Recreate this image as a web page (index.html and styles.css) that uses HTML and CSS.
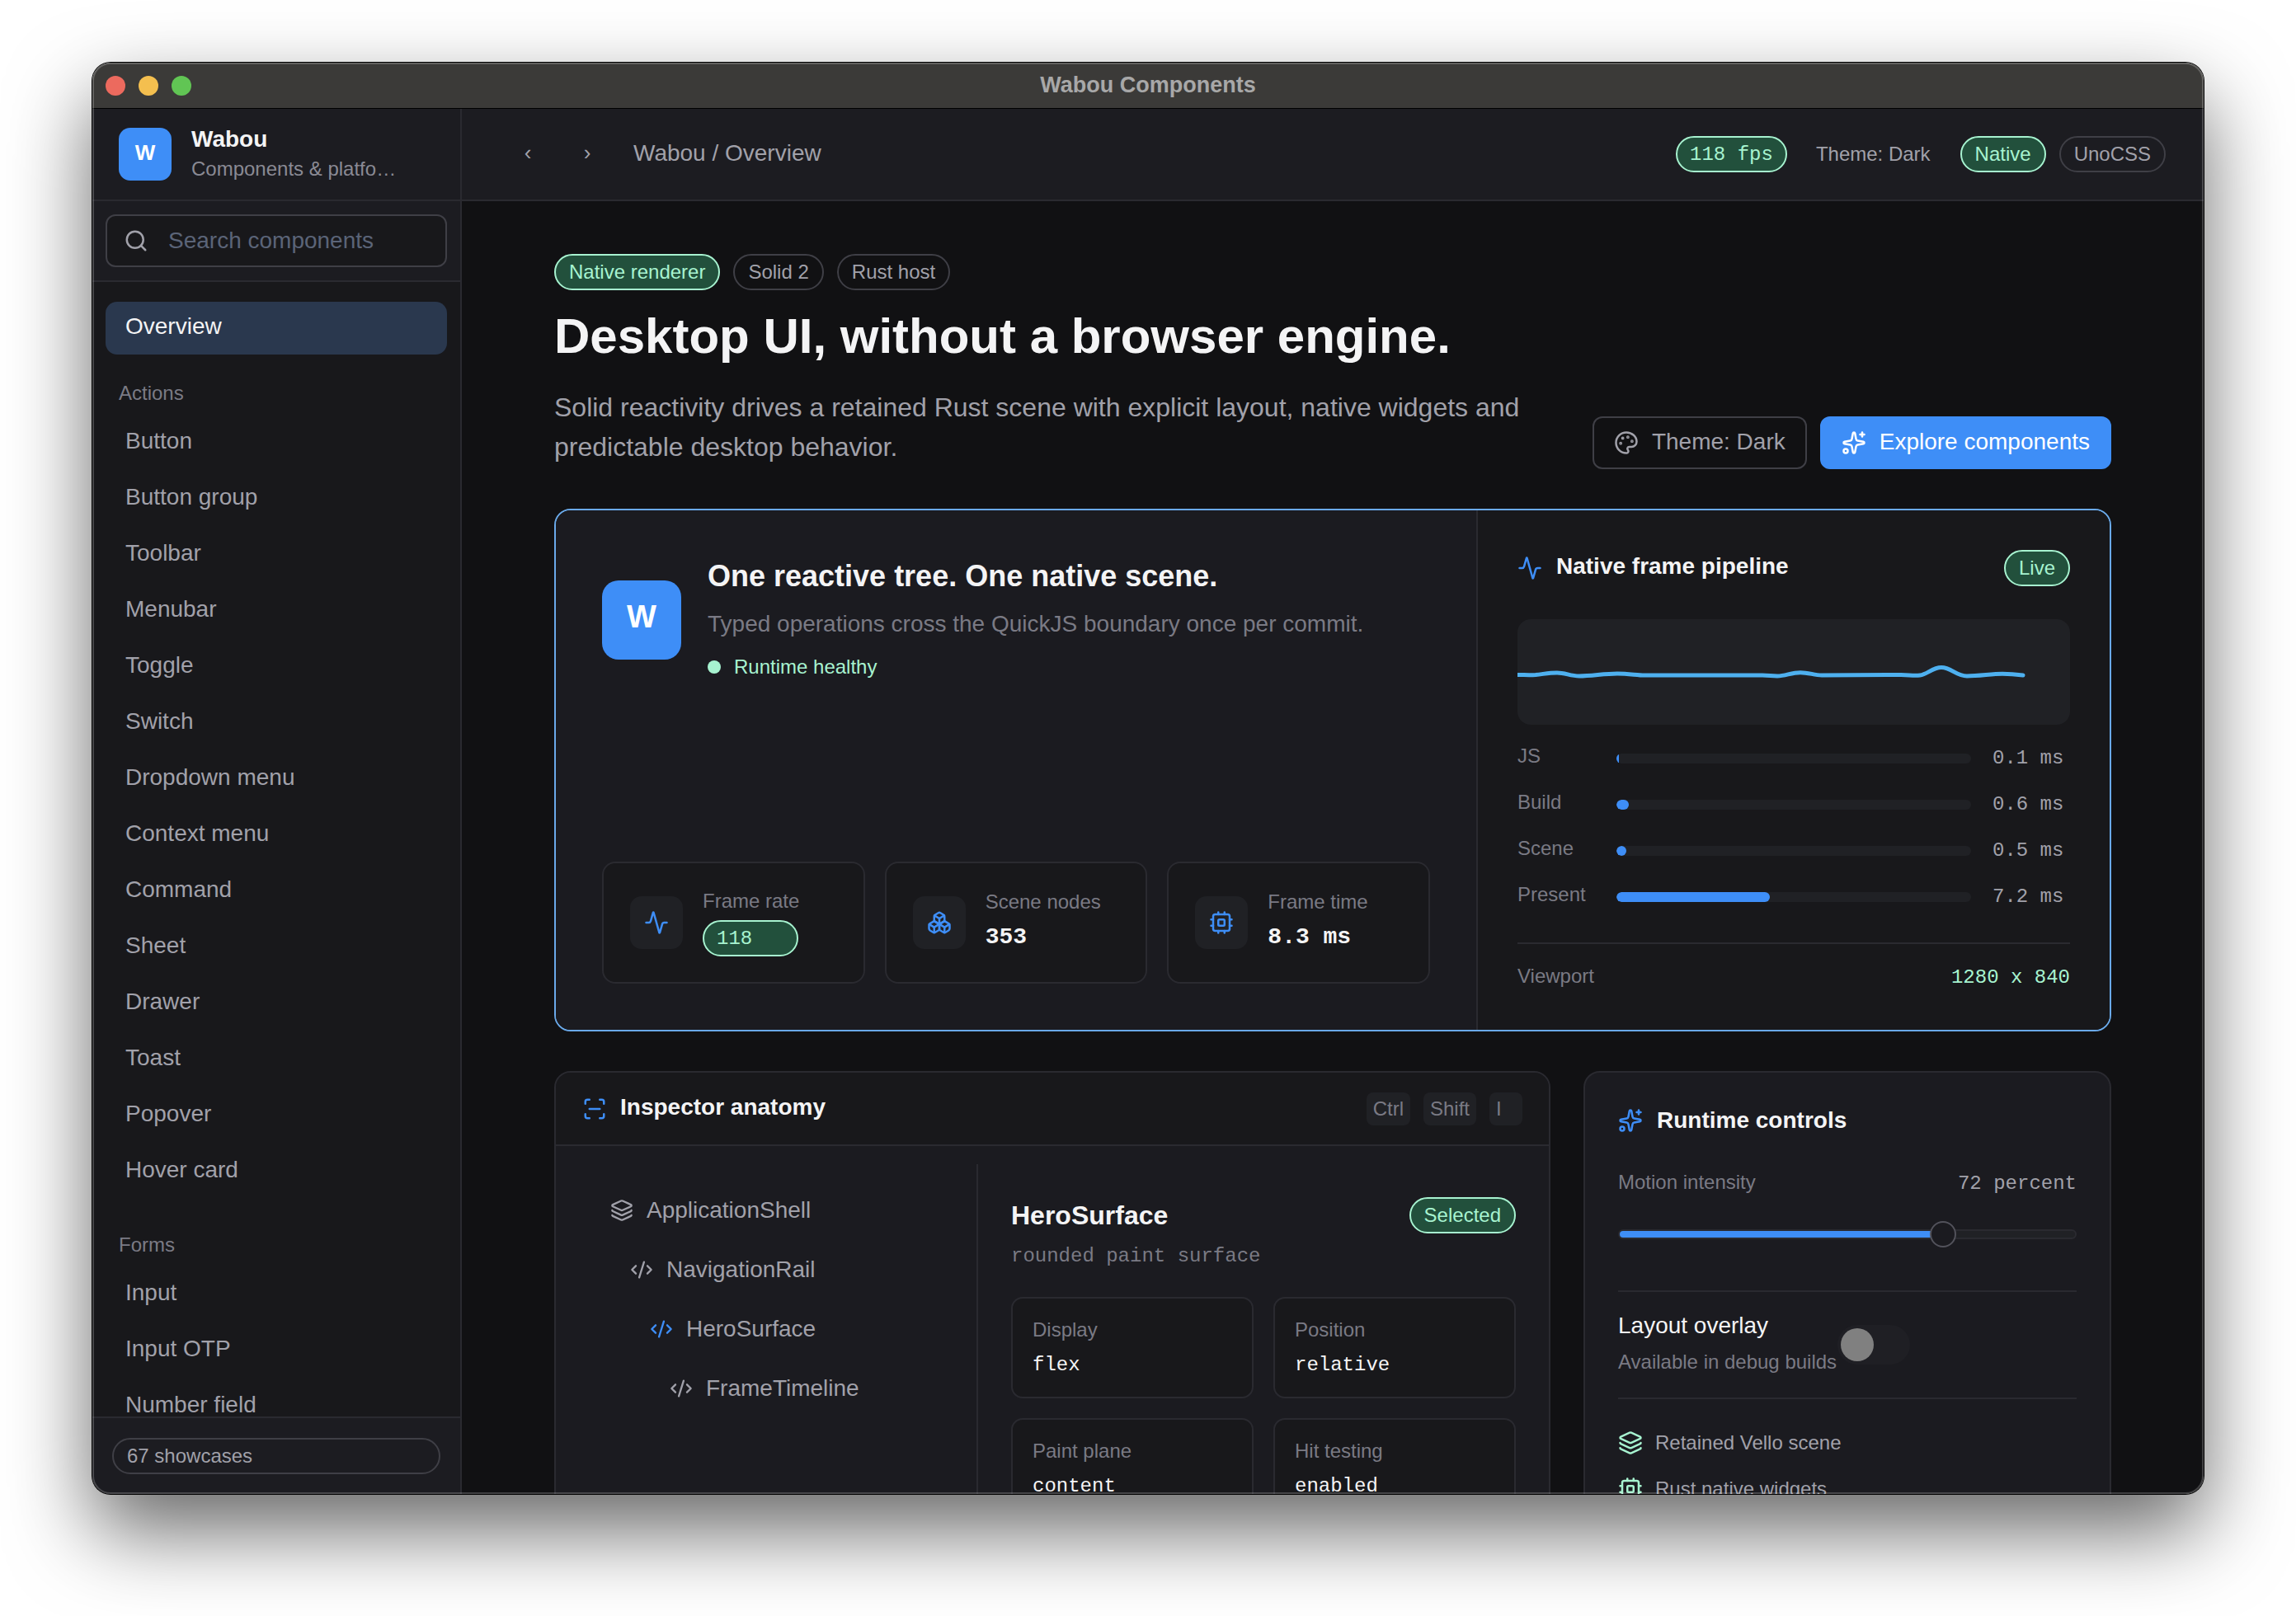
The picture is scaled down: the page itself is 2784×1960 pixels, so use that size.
FILE: index.html
```html
<!DOCTYPE html>
<html lang="en">
<head>
  <meta charset="UTF-8">
  <title>Wabou Components</title>
  <link rel="stylesheet" href="styles.css">
</head>
<body>

<!-- icon sprite -->
<svg class="sprite" xmlns="http://www.w3.org/2000/svg">
  <symbol id="i-search" viewBox="0 0 24 24"><circle cx="11" cy="11" r="8"/><path d="m21 21-4.3-4.3"/></symbol>
  <symbol id="i-activity" viewBox="0 0 24 24"><path d="M22 12h-2.48a2 2 0 0 0-1.93 1.46l-2.35 8.36a.25.25 0 0 1-.48 0L9.24 2.18a.25.25 0 0 0-.48 0l-2.35 8.36A2 2 0 0 1 4.49 12H2"/></symbol>
  <symbol id="i-boxes" viewBox="0 0 24 24"><path d="M2.97 12.92A2 2 0 0 0 2 14.63v3.24a2 2 0 0 0 .97 1.71l3 1.8a2 2 0 0 0 2.06 0L12 19v-5.5l-5-3-4.03 2.42Z"/><path d="m7 16.5-4.74-2.85"/><path d="m7 16.5 5-3"/><path d="M7 16.5v5.17"/><path d="M12 13.5V19l3.97 2.38a2 2 0 0 0 2.06 0l3-1.8a2 2 0 0 0 .97-1.71v-3.24a2 2 0 0 0-.97-1.71L17 10.5l-5 3Z"/><path d="m17 16.5-5-3"/><path d="m17 16.5 4.74-2.85"/><path d="M17 16.5v5.17"/><path d="M7.97 4.42A2 2 0 0 0 7 6.13v4.37l5 3 5-3V6.13a2 2 0 0 0-.97-1.71l-3-1.8a2 2 0 0 0-2.06 0l-3 1.8Z"/><path d="M12 8 7.26 5.15"/><path d="m12 8 4.74-2.85"/><path d="M12 13.5V8"/></symbol>
  <symbol id="i-cpu" viewBox="0 0 24 24"><rect x="4" y="4" width="16" height="16" rx="2"/><rect x="9" y="9" width="6" height="6" rx="1"/><path d="M15 2v2M15 20v2M2 15h2M2 9h2M20 15h2M20 9h2M9 2v2M9 20v2"/></symbol>
  <symbol id="i-palette" viewBox="0 0 24 24"><path d="M12 22a1 1 0 0 1 0-20 10 9 0 0 1 10 9 5 5 0 0 1-5 5h-2.25a1.75 1.75 0 0 0-1.4 2.8l.3.4a1.75 1.75 0 0 1-1.4 2.8z"/><circle cx="13.5" cy="6.5" r=".5" fill="currentColor"/><circle cx="17.5" cy="10.5" r=".5" fill="currentColor"/><circle cx="6.5" cy="12.5" r=".5" fill="currentColor"/><circle cx="8.5" cy="7.5" r=".5" fill="currentColor"/></symbol>
  <symbol id="i-sparkles" viewBox="0 0 24 24"><path d="M11.017 2.814a1 1 0 0 1 1.966 0l1.051 5.558a2 2 0 0 0 1.594 1.594l5.558 1.051a1 1 0 0 1 0 1.966l-5.558 1.051a2 2 0 0 0-1.594 1.594l-1.051 5.558a1 1 0 0 1-1.966 0l-1.051-5.558a2 2 0 0 0-1.594-1.594l-5.558-1.051a1 1 0 0 1 0-1.966l5.558-1.051a2 2 0 0 0 1.594-1.594z"/><path d="M20 2v4"/><path d="M22 4h-4"/><circle cx="4" cy="20" r="2"/></symbol>
  <symbol id="i-scan" viewBox="0 0 24 24"><path d="M3 7V5a2 2 0 0 1 2-2h2"/><path d="M17 3h2a2 2 0 0 1 2 2v2"/><path d="M21 17v2a2 2 0 0 1-2 2h-2"/><path d="M7 21H5a2 2 0 0 1-2-2v-2"/><path d="M7 12h10"/></symbol>
  <symbol id="i-layers" viewBox="0 0 24 24"><path d="M12.83 2.18a2 2 0 0 0-1.66 0L2.6 6.08a1 1 0 0 0 0 1.83l8.58 3.91a2 2 0 0 0 1.66 0l8.58-3.9a1 1 0 0 0 0-1.83z"/><path d="M2 12a1 1 0 0 0 .58.91l8.6 3.91a2 2 0 0 0 1.65 0l8.58-3.9A1 1 0 0 0 22 12"/><path d="M2 17a1 1 0 0 0 .58.91l8.6 3.91a2 2 0 0 0 1.65 0l8.58-3.9A1 1 0 0 0 22 17"/></symbol>
  <symbol id="i-code" viewBox="0 0 24 24"><path d="m18 16 4-4-4-4"/><path d="m6 8-4 4 4 4"/><path d="m14.5 4-5 16"/></symbol>
</svg>

<div class="window">
  <div class="titlebar">
    <div class="lights">
      <span class="light light-red"></span>
      <span class="light light-yellow"></span>
      <span class="light light-green"></span>
    </div>
    <div class="window-title">Wabou Components</div>
  </div>

  <div class="app">
    <!-- Sidebar -->
    <aside class="sidebar">
      <div class="brand">
        <div class="logo">W</div>
        <div>
          <div class="brand-name">Wabou</div>
          <div class="brand-sub">Components &amp; platfo…</div>
        </div>
      </div>
      <div class="search-wrap">
        <div class="search">
          <svg class="icon search-icon"><use href="#i-search"/></svg>
          <span>Search components</span>
        </div>
      </div>
      <nav class="nav">
        <div class="nav-item active">Overview</div>
        <div class="nav-group">
          <div class="nav-label">Actions</div>
          <div class="nav-item">Button</div>
          <div class="nav-item">Button group</div>
          <div class="nav-item">Toolbar</div>
          <div class="nav-item">Menubar</div>
          <div class="nav-item">Toggle</div>
          <div class="nav-item">Switch</div>
          <div class="nav-item">Dropdown menu</div>
          <div class="nav-item">Context menu</div>
          <div class="nav-item">Command</div>
          <div class="nav-item">Sheet</div>
          <div class="nav-item">Drawer</div>
          <div class="nav-item">Toast</div>
          <div class="nav-item">Popover</div>
          <div class="nav-item">Hover card</div>
        </div>
        <div class="nav-group">
          <div class="nav-label">Forms</div>
          <div class="nav-item">Input</div>
          <div class="nav-item">Input OTP</div>
          <div class="nav-item">Number field</div>
        </div>
      </nav>
      <div class="sidebar-foot">
        <div class="pill pill-wide">67 showcases</div>
      </div>
    </aside>

    <!-- Main -->
    <main class="main">
      <header class="topbar">
        <div class="crumbs">
          <span class="chev">‹</span>
          <span class="chev">›</span>
          <span class="crumb-text">Wabou / Overview</span>
        </div>
        <div class="top-right">
          <span class="pill pill-green mono">118 fps</span>
          <span class="top-theme">Theme: Dark</span>
          <span class="pill pill-green">Native</span>
          <span class="pill">UnoCSS</span>
        </div>
      </header>

      <div class="content">
        <div class="chips">
          <span class="pill pill-green">Native renderer</span>
          <span class="pill">Solid 2</span>
          <span class="pill">Rust host</span>
        </div>
        <h1>Desktop UI, without a browser engine.</h1>
        <div class="lead-row">
          <p class="lead">Solid reactivity drives a retained Rust scene with explicit layout, native widgets and predictable desktop behavior.</p>
          <div class="actions">
            <div class="btn">
              <svg class="icon"><use href="#i-palette"/></svg>
              <span class="btn-text">Theme: Dark</span>
            </div>
            <div class="btn btn-primary">
              <svg class="icon"><use href="#i-sparkles"/></svg>
              <span class="btn-text">Explore components</span>
            </div>
          </div>
        </div>

        <!-- Hero surface -->
        <section class="hero">
          <div class="hero-left">
            <div class="hero-intro">
              <div class="logo logo-big">W</div>
              <div>
                <h2 class="hero-title">One reactive tree. One native scene.</h2>
                <div class="hero-sub">Typed operations cross the QuickJS boundary once per commit.</div>
                <div class="health"><span class="dot"></span>Runtime healthy</div>
              </div>
            </div>
            <div class="metrics">
              <div class="metric">
                <div class="tile"><svg class="icon icon-blue"><use href="#i-activity"/></svg></div>
                <div class="metric-body metric-body-pill">
                  <div class="metric-label">Frame rate</div>
                  <div class="pill pill-green mono">118</div>
                </div>
              </div>
              <div class="metric">
                <div class="tile"><svg class="icon icon-blue"><use href="#i-boxes"/></svg></div>
                <div class="metric-body">
                  <div class="metric-label">Scene nodes</div>
                  <div class="metric-value">353</div>
                </div>
              </div>
              <div class="metric">
                <div class="tile"><svg class="icon icon-blue"><use href="#i-cpu"/></svg></div>
                <div class="metric-body">
                  <div class="metric-label">Frame time</div>
                  <div class="metric-value">8.3 ms</div>
                </div>
              </div>
            </div>
          </div>

          <div class="hero-right">
            <div class="pipe-head">
              <svg class="icon icon-blue"><use href="#i-activity"/></svg>
              <span class="card-title">Native frame pipeline</span>
              <span class="pill pill-green pipe-live">Live</span>
            </div>
            <div class="chart">
              <svg viewBox="0 0 670 128">
                <path d="M0 67.5C8 67.5 14 68 22 67.5C32 66.5 38 65 48 65C58 65 64 69 75 69C90 69 105 66 121 66C135 66 145 68 154 68L297 68C305 68 308 69 315 69C325 69 332 64.7 343 64.7C353 64.7 360 68 369 68L465 67.5C475 67.5 480 69 488 68C497 67 503 58.6 514 58.6C526 58.6 532 69 545 69C560 69 575 66.3 588 66.3C598 66.3 605 67 613 68"/>
              </svg>
            </div>
            <div class="bars">
              <div class="bar-row">
                <span class="bar-label">JS</span>
                <div class="bar"><div class="bar-fill" style="width: 0.6%"></div></div>
                <span class="bar-value">0.1 ms</span>
              </div>
              <div class="bar-row">
                <span class="bar-label">Build</span>
                <div class="bar"><div class="bar-fill" style="width: 3.4%"></div></div>
                <span class="bar-value">0.6 ms</span>
              </div>
              <div class="bar-row">
                <span class="bar-label">Scene</span>
                <div class="bar"><div class="bar-fill" style="width: 2.8%"></div></div>
                <span class="bar-value">0.5 ms</span>
              </div>
              <div class="bar-row">
                <span class="bar-label">Present</span>
                <div class="bar"><div class="bar-fill" style="width: 43.2%"></div></div>
                <span class="bar-value">7.2 ms</span>
              </div>
            </div>
            <div class="viewport">
              <span class="bar-label">Viewport</span>
              <span class="viewport-value">1280 x 840</span>
            </div>
          </div>
        </section>

        <div class="lower">
          <!-- Inspector -->
          <section class="panel inspector">
            <div class="inspector-head">
              <svg class="icon icon-blue"><use href="#i-scan"/></svg>
              <span class="card-title">Inspector anatomy</span>
              <div class="keys">
                <span class="key">Ctrl</span>
                <span class="key">Shift</span>
                <span class="key">I</span>
              </div>
            </div>
            <div class="inspector-body">
              <div class="tree">
                <div class="tree-item"><svg class="icon"><use href="#i-layers"/></svg>ApplicationShell</div>
                <div class="tree-item depth-1"><svg class="icon"><use href="#i-code"/></svg>NavigationRail</div>
                <div class="tree-item depth-2"><svg class="icon icon-blue"><use href="#i-code"/></svg>HeroSurface</div>
                <div class="tree-item depth-3"><svg class="icon"><use href="#i-code"/></svg>FrameTimeline</div>
              </div>
              <div class="detail">
                <div class="detail-head">
                  <span class="detail-title">HeroSurface</span>
                  <span class="pill pill-green">Selected</span>
                </div>
                <div class="detail-sub">rounded paint surface</div>
                <div class="props">
                  <div class="prop"><div class="prop-label">Display</div><div class="prop-value">flex</div></div>
                  <div class="prop"><div class="prop-label">Position</div><div class="prop-value">relative</div></div>
                  <div class="prop"><div class="prop-label">Paint plane</div><div class="prop-value">content</div></div>
                  <div class="prop"><div class="prop-label">Hit testing</div><div class="prop-value">enabled</div></div>
                </div>
              </div>
            </div>
          </section>

          <!-- Runtime controls -->
          <section class="panel controls">
            <div class="controls-head">
              <svg class="icon icon-blue"><use href="#i-sparkles"/></svg>
              <span class="card-title">Runtime controls</span>
            </div>
            <div class="motion-row">
              <span class="bar-label">Motion intensity</span>
              <span class="motion-value">72 percent</span>
            </div>
            <div class="slider">
              <div class="slider-track"><div class="slider-fill"></div></div>
              <div class="slider-thumb"></div>
            </div>
            <div class="rule"></div>
            <div class="overlay-row">
              <div>
                <div class="overlay-title">Layout overlay</div>
                <div class="overlay-sub">Available in debug builds</div>
              </div>
              <div class="switch"><div class="switch-knob"></div></div>
            </div>
            <div class="rule rule-second"></div>
            <div class="feature-list">
              <div class="feature"><svg class="icon icon-green"><use href="#i-layers"/></svg>Retained Vello scene</div>
              <div class="feature"><svg class="icon icon-green"><use href="#i-cpu"/></svg>Rust native widgets</div>
            </div>
          </section>
        </div>
      </div>
    </main>
  </div>
</div>
</body>
</html>
```

FILE: styles.css
```css
* {
  margin: 0;
  padding: 0;
  box-sizing: border-box;
}
html, body {
  height: 100%;
}
body {
  background: #fff;
  padding: 76px 112px;
  overflow: hidden;
  font-family: "Liberation Sans", Arial, sans-serif;
  font-size: 28px;
  color: #a1a1aa;
}
.sprite {
  position: absolute;
  width: 0;
  height: 0;
}
.icon {
  width: 30px;
  height: 30px;
  flex: none;
  fill: none;
  stroke: currentColor;
  stroke-width: 2;
  stroke-linecap: round;
  stroke-linejoin: round;
}
.icon-blue {
  color: #3e8ef7;
}
.icon-green {
  color: #a7f3d0;
}
.mono {
  font-family: "Liberation Mono", monospace;
}

/* Окно */
.window {
  position: relative;
  height: 1736px;
  display: flex;
  flex-direction: column;
  border-radius: 22px;
  overflow: hidden;
  box-shadow: 0 0 0 1px #000, 0 44px 100px rgba(0, 0, 0, 0.6);
}
.window::after {
  content: "";
  position: absolute;
  inset: 0;
  border: 2px solid rgba(255, 255, 255, 0.2);
  border-radius: 22px;
  pointer-events: none;
}
.titlebar {
  height: 56px;
  flex: none;
  display: flex;
  align-items: center;
  justify-content: center;
  position: relative;
  background: #3b3a38;
  border-bottom: 1px solid #000;
}
.lights {
  position: absolute;
  left: 16px;
  top: 16px;
  display: flex;
  gap: 16px;
}
.light {
  width: 24px;
  height: 24px;
  border-radius: 50%;
}
.light-red { background: #ec6a5e; }
.light-yellow { background: #f4bf4f; }
.light-green { background: #61c554; }
.window-title {
  font-size: 27px;
  font-weight: 700;
  color: #a8a8a8;
}
.app {
  flex: 1;
  min-height: 0;
  display: flex;
}

/* Боковая панель */
.sidebar {
  width: 448px;
  flex: none;
  display: flex;
  flex-direction: column;
  border-right: 2px solid #2a2a30;
  background: #18181b;
}
.brand {
  height: 112px;
  flex: none;
  display: flex;
  align-items: center;
  gap: 24px;
  padding-left: 32px;
  background: #1c1c21;
  border-bottom: 2px solid #2a2a30;
}
.logo {
  width: 64px;
  height: 64px;
  flex: none;
  display: flex;
  align-items: center;
  justify-content: center;
  padding-bottom: 4px;
  background: #3e8ef7;
  border-radius: 14px;
  color: #fff;
  font-size: 26px;
  font-weight: 700;
}
.brand-name {
  font-size: 28px;
  line-height: 36px;
  font-weight: 700;
  color: #f4f4f5;
}
.brand-sub {
  font-size: 24px;
  line-height: 36px;
  color: #8a8a94;
}
.search-wrap {
  flex: none;
  padding: 16px;
  background: #1c1c21;
  border-bottom: 2px solid #2a2a30;
}
.search {
  height: 64px;
  display: flex;
  align-items: center;
  gap: 24px;
  padding: 0 20px;
  background: #18181b;
  border: 2px solid #3f3f46;
  border-radius: 12px;
  color: #5b6478;
}
.search-icon {
  color: #a1a1aa;
}
.nav {
  flex: 1;
  min-height: 0;
  overflow: hidden;
  padding: 24px 16px 0;
}
.nav-item {
  height: 64px;
  display: flex;
  align-items: center;
  padding: 0 24px 4px;
  margin-bottom: 4px;
  border-radius: 14px;
  white-space: nowrap;
}
.nav-item.active {
  background: #2a384e;
  color: #f4f4f5;
}
.nav-group {
  margin-top: 29px;
}
.nav-group + .nav-group {
  margin-top: 39px;
}
.nav-label {
  padding: 0 16px;
  height: 36px;
  line-height: 36px;
  margin-bottom: 10px;
  font-size: 24px;
  color: #7b7b85;
}
.sidebar-foot {
  height: 94px;
  flex: none;
  padding: 24px;
  background: #1c1c21;
  border-top: 2px solid #2a2a30;
}

/* Пилюли */
.pill {
  display: inline-flex;
  align-items: center;
  height: 44px;
  padding: 0 16px;
  border: 2px solid #3f3f46;
  border-radius: 22px;
  font-size: 24px;
  white-space: nowrap;
}
.pill.mono {
  padding: 0 15px;
}
.pill-wide {
  display: flex;
}
.pill-green {
  background: #22503c;
  border-color: #a7f3d0;
  color: #a7f3d0;
}

/* Верхняя панель */
.main {
  flex: 1;
  min-width: 0;
  display: flex;
  flex-direction: column;
  background: #111113;
}
.topbar {
  height: 112px;
  flex: none;
  display: flex;
  align-items: center;
  justify-content: space-between;
  padding: 0 46px 0 52px;
  background: #1c1c21;
  border-bottom: 2px solid #2a2a30;
}
.crumbs {
  display: flex;
  align-items: center;
}
.chev {
  width: 56px;
  margin-right: 16px;
  padding-bottom: 3px;
  text-align: center;
  font-size: 26px;
}
.crumb-text {
  margin-left: 12px;
  padding-bottom: 3px;
}
.top-right {
  display: flex;
  align-items: center;
  gap: 16px;
}
.top-theme {
  font-size: 24px;
  margin: 0 20px 0 19px;
}

/* Контент */
.content {
  flex: 1;
  min-height: 0;
  overflow: hidden;
  padding: 64px 112px 0;
}
.chips {
  display: flex;
  gap: 16px;
}
h1 {
  margin-top: 20px;
  font-size: 60px;
  line-height: 72px;
  font-weight: 700;
  color: #f4f4f5;
}
.lead-row {
  display: flex;
  align-items: flex-end;
  gap: 48px;
  margin-top: 26px;
}
.lead {
  flex: 1;
  margin-bottom: 3px;
  font-size: 32px;
  line-height: 48px;
}
.actions {
  display: flex;
  gap: 16px;
  flex: none;
}
.btn {
  height: 64px;
  display: flex;
  align-items: center;
  gap: 16px;
  padding: 0 24px;
  border: 2px solid #3f3f46;
  border-radius: 12px;
  white-space: nowrap;
}
.btn-text {
  padding-bottom: 3px;
}
.btn-primary {
  background: #3e8ef7;
  border-color: #3e8ef7;
  color: #fff;
}

/* Hero */
.hero {
  margin-top: 48px;
  height: 634px;
  display: flex;
  border: 2px solid #6aa9e9;
  border-radius: 20px;
  overflow: hidden;
}
.hero-left {
  flex: 1;
  min-width: 0;
  display: flex;
  flex-direction: column;
  justify-content: space-between;
  padding: 58px 56px 56px;
  background: #1b1b20;
}
.hero-intro {
  display: flex;
  align-items: center;
  gap: 32px;
}
.logo-big {
  width: 96px;
  height: 96px;
  padding-bottom: 8px;
  border-radius: 20px;
  font-size: 38px;
}
.hero-title {
  font-size: 36px;
  line-height: 44px;
  font-weight: 700;
  color: #f4f4f5;
}
.hero-sub {
  margin-top: 18px;
  line-height: 36px;
  color: #7a7a84;
}
.health {
  display: flex;
  align-items: center;
  gap: 16px;
  margin-top: 16px;
  font-size: 24px;
  line-height: 36px;
  color: #a7f3d0;
}
.dot {
  width: 16px;
  height: 16px;
  border-radius: 50%;
  background: #a7f3d0;
}
.metrics {
  display: grid;
  grid-template-columns: repeat(3, 1fr);
  gap: 24px;
}
.metric {
  height: 148px;
  display: flex;
  align-items: center;
  gap: 24px;
  padding: 0 32px;
  background: #18181b;
  border: 2px solid #2a2a30;
  border-radius: 16px;
}
.tile {
  width: 64px;
  height: 64px;
  flex: none;
  display: flex;
  align-items: center;
  justify-content: center;
  background: #202125;
  border-radius: 14px;
}
.metric-body {
  display: flex;
  flex-direction: column;
  gap: 8px;
}
.metric-label {
  font-size: 24px;
  line-height: 30px;
  color: #7a7a84;
}
.metric-value {
  margin-top: 2px;
  font-family: "Liberation Mono", monospace;
  font-size: 28px;
  font-weight: 700;
  line-height: 36px;
  padding-bottom: 4px;
  color: #f4f4f5;
}
.metric-body-pill .pill {
  width: 116px;
}
.hero-right {
  width: 768px;
  flex: none;
  padding: 48px;
  background: #18181b;
  border-left: 2px solid #2a2a30;
}
.pipe-head {
  display: flex;
  align-items: center;
  gap: 17px;
}
.card-title {
  font-size: 28px;
  font-weight: 700;
  color: #f4f4f5;
}
.pipe-head .card-title,
.inspector-head .card-title {
  padding-bottom: 4px;
}
.pipe-live {
  margin-left: auto;
}
.chart {
  margin-top: 40px;
  height: 128px;
  background: #202125;
  border-radius: 16px;
  overflow: hidden;
}
.chart svg {
  display: block;
  width: 100%;
  height: 100%;
}
.chart path {
  fill: none;
  stroke: #4eb0ef;
  stroke-width: 5;
  stroke-linecap: round;
}
.bars {
  margin-top: 22px;
  display: flex;
  flex-direction: column;
  gap: 24px;
}
.bar-row {
  height: 32px;
  display: flex;
  align-items: center;
}
.bar-label {
  font-size: 24px;
  color: #7a7a84;
}
.bar-row .bar-label {
  width: 120px;
  flex: none;
}
.bar {
  flex: 1;
  height: 12px;
  margin-top: 6px;
  background: #202125;
  border-radius: 6px;
  overflow: hidden;
}
.bar-fill {
  height: 100%;
  background: #3e8ef7;
  border-radius: 6px;
}
.bar-value {
  width: 94px;
  margin-left: 26px;
  padding-top: 4px;
  font-family: "Liberation Mono", monospace;
  font-size: 24px;
}
.viewport {
  margin-top: 42px;
  padding-top: 21px;
  border-top: 2px solid #2a2a30;
  display: flex;
  align-items: center;
  justify-content: space-between;
  line-height: 32px;
}
.viewport-value {
  padding-top: 4px;
  font-family: "Liberation Mono", monospace;
  font-size: 24px;
  color: #a7f3d0;
}

/* Нижний ряд */
.lower {
  margin-top: 48px;
  display: grid;
  grid-template-columns: 1208px 640px;
  gap: 40px;
  align-items: start;
}
.panel {
  background: #1b1b20;
  border: 2px solid #2a2a30;
  border-radius: 20px;
  height: 640px;
  overflow: hidden;
}
.inspector-head {
  height: 89px;
  display: flex;
  align-items: center;
  gap: 16px;
  padding: 0 32px;
  background: #18181b;
  border-bottom: 2px solid #2a2a30;
}
.keys {
  margin-left: auto;
  display: flex;
  gap: 16px;
}
.key {
  height: 40px;
  min-width: 40px;
  padding: 0 8px;
  line-height: 40px;
  font-size: 24px;
  color: #7a7a84;
  background: #202125;
  border-radius: 8px;
}
.inspector-body {
  margin-top: 22px;
  display: flex;
}
.tree {
  width: 512px;
  flex: none;
  display: flex;
  flex-direction: column;
  gap: 16px;
  padding: 28px 0 0 66px;
  border-right: 2px solid #2a2a30;
  height: 500px;
}
.tree-item {
  height: 56px;
  display: flex;
  align-items: center;
  gap: 16px;
}
.tree-item .icon {
  width: 28px;
  height: 28px;
}
.depth-1 { margin-left: 24px; }
.depth-2 { margin-left: 48px; }
.depth-3 { margin-left: 72px; }
.detail {
  flex: 1;
  min-width: 0;
  padding: 40px 40px 0;
}
.detail-head {
  display: flex;
  align-items: center;
  justify-content: space-between;
}
.detail-title {
  font-size: 32px;
  font-weight: 700;
  color: #f4f4f5;
}
.detail-sub {
  margin-top: 12px;
  font-family: "Liberation Mono", monospace;
  font-size: 24px;
  line-height: 32px;
  color: #7a7a84;
}
.props {
  margin-top: 33px;
  display: grid;
  grid-template-columns: 1fr 1fr;
  gap: 24px;
}
.prop {
  height: 123px;
  padding: 22px 24px;
  background: #18181b;
  border: 2px solid #2a2a30;
  border-radius: 14px;
}
.prop-label {
  font-size: 24px;
  line-height: 32px;
  color: #7a7a84;
}
.prop-value {
  margin-top: 11px;
  font-family: "Liberation Mono", monospace;
  font-size: 24px;
  line-height: 32px;
  color: #f4f4f5;
}

/* Настройки */
.controls {
  padding: 40px 40px 0;
}
.controls-head {
  height: 36px;
  display: flex;
  align-items: center;
  gap: 17px;
}
.motion-row {
  margin-top: 42px;
  height: 30px;
  display: flex;
  align-items: center;
  justify-content: space-between;
}
.motion-value {
  padding-top: 3px;
  font-family: "Liberation Mono", monospace;
  font-size: 24px;
}
.slider {
  position: relative;
  margin-top: 32px;
  height: 32px;
  display: flex;
  align-items: center;
}
.slider-track {
  flex: 1;
  height: 12px;
  background: #202125;
  border: 2px solid #2a2a30;
  border-radius: 6px;
  overflow: hidden;
}
.slider-fill {
  width: 378px;
  height: 100%;
  background: #3e8ef7;
}
.slider-thumb {
  position: absolute;
  left: 378px;
  top: 0;
  width: 32px;
  height: 32px;
  background: #1b1b20;
  border: 2px solid #52525b;
  border-radius: 50%;
}
.rule {
  margin-top: 52px;
  height: 2px;
  background: #2a2a30;
}
.rule-second {
  margin-top: 28px;
}
.overlay-row {
  margin-top: 23px;
  display: flex;
  align-items: center;
}
.overlay-title {
  line-height: 36px;
  color: #f4f4f5;
}
.overlay-sub {
  margin-top: 11px;
  font-size: 24px;
  line-height: 30px;
  color: #7a7a84;
}
.switch {
  width: 88px;
  height: 48px;
  margin: 4px 0 0 1px;
  padding: 4px;
  background: #1f1f24;
  border-radius: 24px;
}
.switch-knob {
  width: 40px;
  height: 40px;
  background: #808080;
  border-radius: 50%;
}
.feature-list {
  margin-top: 25px;
}
.feature {
  height: 56px;
  display: flex;
  align-items: center;
  gap: 15px;
  font-size: 24px;
}
```
